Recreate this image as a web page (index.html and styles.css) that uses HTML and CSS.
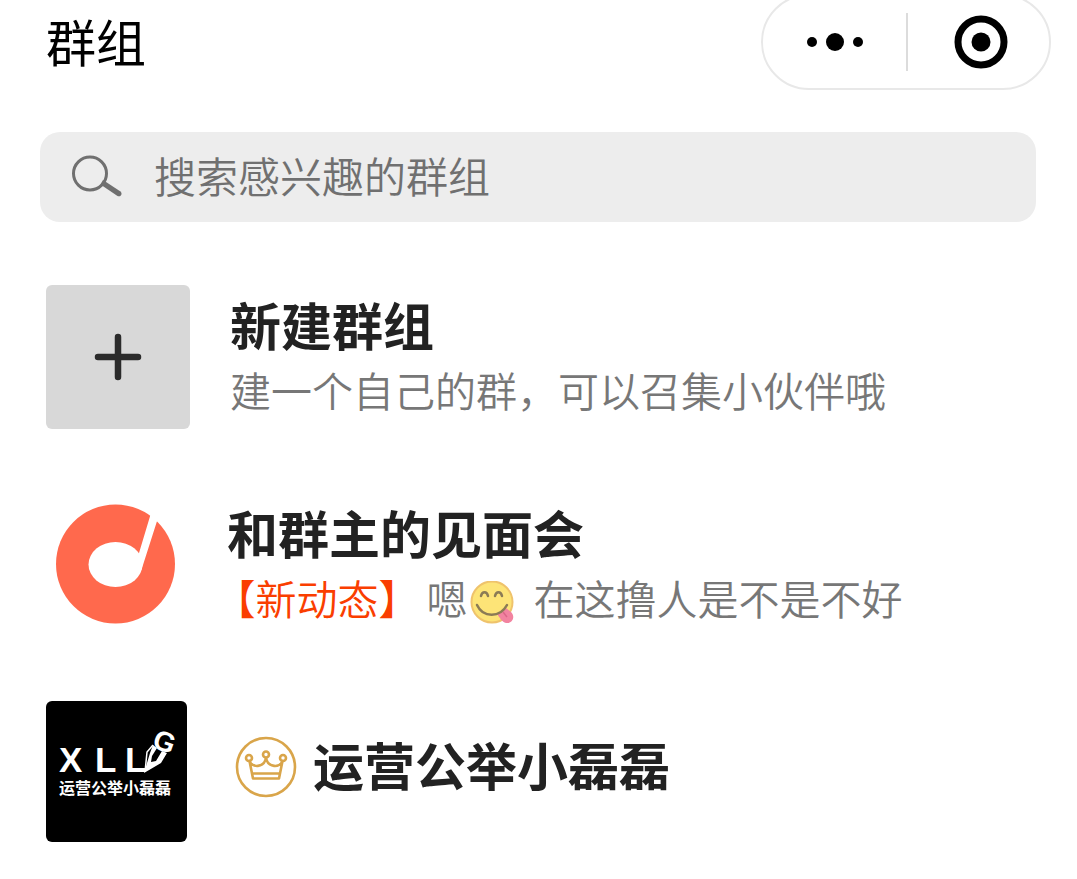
FILE: index.html
```html
<!DOCTYPE html>
<html lang="zh-CN">
<head>
    <meta charset="UTF-8">
    <meta name="viewport" content="width=device-width, initial-scale=1.0">
    <title>群组</title>
    <link rel="stylesheet" href="styles.css">
</head>
<body>
    <header class="header">
        <h1>群组</h1>
        <div class="capsule">
            <button type="button" class="capsule-btn" aria-label="更多">
                <svg width="58" height="20" viewBox="0 0 58 20">
                    <circle cx="6" cy="10" r="5"/>
                    <circle cx="29" cy="10" r="9"/>
                    <circle cx="52" cy="10" r="5"/>
                </svg>
            </button>
            <button type="button" class="capsule-btn" aria-label="关闭">
                <svg width="54" height="54" viewBox="0 0 54 54">
                    <circle cx="27" cy="27" r="23" fill="none" stroke="#000" stroke-width="7"/>
                    <circle cx="27" cy="27" r="9.5"/>
                </svg>
            </button>
        </div>
    </header>

    <form class="search">
        <label for="searchInput" class="search-icon" aria-label="搜索">
            <svg width="52" height="44" viewBox="0 0 52 44">
                <circle cx="20" cy="18.500" r="16.500" fill="none" stroke="#707070" stroke-width="3"/>
                <path d="M33 25L50.500 36.500C53 39 50.500 42.500 47.500 41L30.500 29.500Z" fill="#707070"/>
            </svg>
        </label>
        <input type="search" id="searchInput" placeholder="搜索感兴趣的群组">
    </form>

    <main class="groups">
        <a href="#" class="group">
            <span class="avatar avatar-new">
                <svg width="48" height="48" viewBox="0 0 48 48" stroke="#2b2b2b" stroke-width="6.500" stroke-linecap="round">
                    <path d="M24 4V44M4 24H44"/>
                </svg>
            </span>
            <div class="group-body">
                <h2>新建群组</h2>
                <p>建一个自己的群，可以召集小伙伴哦</p>
            </div>
        </a>

        <a href="#" class="group">
            <span class="avatar avatar-light">
                <svg width="141" height="141" viewBox="0 0 141 141">
                    <circle cx="69.500" cy="71" r="59.500" fill="#ff694d"/>
                    <ellipse cx="69.500" cy="71.500" rx="27" ry="22.500" fill="#fff"/>
                    <path d="M105 20L112 25L97 72C95 79 91 84 86 87L82 70L93 60Z" fill="#fff"/>
                </svg>
            </span>
            <div class="group-body">
                <h2>和群主的见面会</h2>
                <p>
                    <span class="tag">【新动态】</span><span>嗯</span>
                    <svg class="emoji" width="44" height="44" viewBox="0 0 44 44">
                        <circle cx="22" cy="21" r="20.500" fill="#fde477" stroke="#efc36c" stroke-width="2"/>
                        <path d="M11 15C12 10 17 10 18 15M25 15C26 10 31 10 32 15" fill="none" stroke="#8b7b55" stroke-width="2.500" stroke-linecap="round"/>
                        <path d="M27 33C31 32 34 30 36 27L41 31C46 36 42 43 36 42C32 41 30 37 27 33Z" fill="#f283a0"/>
                        <path d="M33 31L37 36" stroke="#dc6688" stroke-width="1.500"/>
                        <path d="M7 24C13 37 30 37 37 24" fill="none" stroke="#8b7b55" stroke-width="2.500" stroke-linecap="round"/>
                    </svg>
                    <span>在这撸人是不是不好</span>
                </p>
            </div>
        </a>

        <a href="#" class="group">
            <span class="avatar avatar-dark">
                <svg width="141" height="141" viewBox="0 0 141 141" fill="#fff">
                    <g class="logo-letters">
                        <text x="13" y="71">X</text>
                        <text x="49" y="71">L</text>
                        <text x="79" y="71">L</text>
                    </g>
                    <text class="logo-g" x="105" y="46" transform="rotate(20 105 46)">G</text>
                    <path d="M107 44L101 51L99 71" fill="none" stroke="#fff" stroke-width="1.500"/>
                    <path d="M107 44L111 47L106 55L105 61L110 60L116 50L121 52L115 62L98 72L104 52Z"/>
                    <text class="logo-name" x="13" y="93">运营公举小磊磊</text>
                </svg>
            </span>
            <div class="group-body group-single">
                <svg class="crown" width="62" height="62" viewBox="0 0 62 62" fill="none" stroke="#d9a54a" stroke-width="2.600" stroke-linejoin="round">
                    <circle cx="31" cy="31" r="29"/>
                    <circle cx="14" cy="22" r="3"/>
                    <circle cx="31" cy="18.500" r="3"/>
                    <circle cx="48" cy="22" r="3"/>
                    <path d="M14.500 25L18 42.500H44L47.500 25C45 32 33 32 31 22C29 32 17 32 14.500 25ZM17 37.500H45"/>
                </svg>
                <h2>运营公举小磊磊</h2>
            </div>
        </a>
    </main>
</body>
</html>
```

FILE: styles.css
```css
* {
    box-sizing: border-box;
}

body {
    margin: 0;
    font-family: "Noto Sans CJK SC", sans-serif;
    background-color: #fff;
    color: #222;
    overflow-x: hidden;
}

h1,
h2,
p {
    margin: 0;
}

svg {
    display: block;
}

.header {
    display: flex;
    justify-content: space-between;
    align-items: flex-start;
    padding: 0 26px 0 46px;
    height: 132px;
}

h1 {
    padding-top: 4px;
    font-size: 50px;
    line-height: 72px;
    font-weight: 400;
    color: #000;
}

/* the capsule runs off the top edge */
.capsule {
    display: flex;
    align-items: center;
    width: 290px;
    height: 96px;
    margin-top: -6px;
    border: 2px solid #e8e8e8;
    border-radius: 48px;
}

.capsule-btn {
    display: flex;
    width: 50%;
    justify-content: center;
    align-items: center;
    height: 58px;
    padding: 0;
    border: none;
    background: none;
    cursor: pointer;
}

.capsule-btn + .capsule-btn {
    padding-left: 4px;
    border-left: 2px solid #dcdcdc;
}

.search {
    display: flex;
    align-items: center;
    gap: 32px;
    height: 90px;
    margin: 0 41px 0 40px;
    padding: 0 30px;
    border-radius: 20px;
    background-color: #ededed;
}

.search input {
    flex: 1;
    min-width: 0;
    padding: 0 0 6px;
    border: none;
    outline: none;
    background: none;
    font-family: inherit;
    font-size: 42px;
    font-weight: 350;
    color: #222;
}

.search input::placeholder {
    color: #707070;
}

.groups {
    display: flex;
    flex-direction: column;
    gap: 64px;
    padding: 63px 40px 36px 46px;
}

.group {
    display: flex;
    gap: 40px;
    min-height: 144px;
    color: inherit;
    text-decoration: none;
}

.avatar {
    display: flex;
    flex-shrink: 0;
    justify-content: center;
    align-items: center;
    width: 141px;
    height: 141px;
    border-radius: 6px;
    overflow: hidden;
}

.avatar-new {
    width: 144px;
    height: 144px;
    background-color: #d8d8d8;
}

.avatar-light {
    background-color: #fff;
}

.avatar-dark {
    background-color: #000;
}

.logo-letters {
    font: bold 35px "Liberation Sans", sans-serif;
}

.logo-g {
    font: bold 28px "Liberation Sans", sans-serif;
}

.logo-name {
    font: bold 16px "Liberation Sans", "Noto Sans CJK SC", sans-serif;
}

.group-body {
    padding-top: 9px;
}

h2 {
    font-size: 51px;
    line-height: 60px;
    font-weight: 700;
}

.group-body p {
    display: flex;
    align-items: center;
    margin-top: 2px;
    font-size: 41px;
    line-height: 66px;
    font-weight: 350;
    color: #777;
    white-space: nowrap;
}

.tag {
    padding: 0 7px 0 8px;
    color: #fa3e00;
    text-spacing-trim: trim-start;
}

.emoji {
    margin: 12px 20px 0 2px;
}

.group-single {
    display: flex;
    align-items: center;
    align-self: center;
    gap: 16px;
    padding: 0 0 12px 8px;
}

.group-single h2 {
    padding-bottom: 6px;
}
```
